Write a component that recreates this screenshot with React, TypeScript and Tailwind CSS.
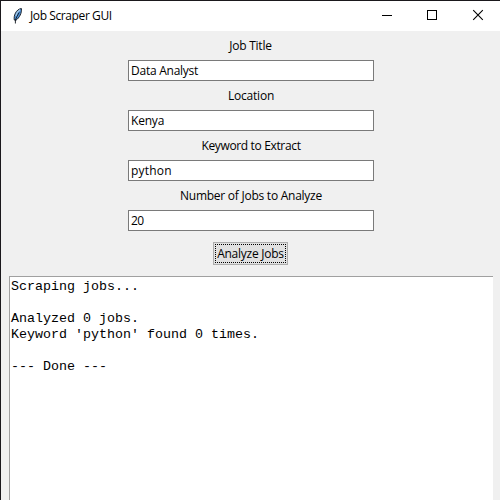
const fields = [
  { label: 'Job Title', value: 'Data Analyst', labelStyle: 'tracking-[-0.25px]', valueStyle: 'tracking-[-0.25px]' },
  { label: 'Location', value: 'Kenya', labelStyle: 'pl-px tracking-[-0.2px]', valueStyle: 'tracking-[-0.2px]' },
  { label: 'Keyword to Extract', value: 'python', labelStyle: 'pl-px tracking-[-0.35px]', valueStyle: 'tracking-[0.2px]' },
  { label: 'Number of Jobs to Analyze', value: '20', labelStyle: 'pl-px tracking-[-0.25px]', valueStyle: 'tracking-[-0.5px]' },
];

function Feather() {
  return (
    <svg width="16" height="16" viewBox="0 0 16 16" className="block">
      <path d="M12.4 0.5C10 0.7 7.6 2.6 6.4 5.2C5.2 7.6 4.9 9.8 5.3 12L6.8 12.4C10.6 9.6 12.9 5 12.4 0.5Z" fill="#4a8fd8" stroke="#20262e" strokeWidth="1" />
      <path d="M11 1.8C9 3 7.6 5.4 6.8 8" stroke="#b5cfe2" strokeWidth="1.1" fill="none" />
      <path d="M10.2 4.5C8.6 7 7.2 9.5 6.4 12V15.5" stroke="#10151c" strokeWidth="0.9" fill="none" />
    </svg>
  );
}

function TitleBar() {
  return (
    <header className="flex h-[30px] shrink-0 items-center bg-white pl-2">
      <Feather />
      <h1 className="ml-[5px] flex-1 whitespace-nowrap text-[12px] leading-4 tracking-[-0.4px]">Job Scraper GUI</h1>
      <div className="flex h-full items-center">
        <svg width="46" height="30" viewBox="0 0 46 30">
          <path d="M19 14.5H29" stroke="#000" shapeRendering="crispEdges" />
        </svg>
        <svg width="46" height="30" viewBox="0 0 46 30">
          <rect x="18.5" y="9.5" width="9" height="9" fill="none" stroke="#000" shapeRendering="crispEdges" />
        </svg>
        <svg width="45" height="30" viewBox="0 0 45 30">
          <path d="M18.2 9.2L27.8 18.8M27.8 9.2L18.2 18.8" stroke="#000" strokeWidth="1.1" />
        </svg>
      </div>
    </header>
  );
}

export default function App() {
  return (
    <div className="flex h-[500px] w-[500px] flex-col overflow-hidden border-l border-t border-[#1a181c] bg-[#f0f0f0] font-['Open_Sans','Noto_Sans',sans-serif] text-[12px] text-black">
      <TitleBar />
      <main className="flex min-h-0 flex-1 flex-col items-center pt-[5px]">
        {fields.map((f) => (
          <div key={f.label} className="flex h-[50px] w-[246px] shrink-0 flex-col">
            <label className={`h-6 whitespace-nowrap text-center leading-5 ${f.labelStyle}`}>{f.label}</label>
            <div className={`flex h-[21px] items-center border border-[#7a7a7a] bg-white pl-[2.5px] leading-4 ${f.valueStyle}`}>{f.value}</div>
          </div>
        ))}
        <button className="mt-[6px] flex h-[23px] w-[75px] shrink-0 border border-[#adadad] bg-[#e1e1e1] p-px">
          <span className="flex h-full w-full items-center justify-center whitespace-nowrap border border-dotted border-black leading-4 tracking-[-0.25px]">Analyze Jobs</span>
        </button>
        <div className="mt-[11px] flex min-h-0 w-full flex-1 pl-2 pr-[7px]">
          <pre className="h-full w-full border-l border-t border-[#a0a0a0] bg-white pl-px pt-[2px] font-['Liberation_Mono',monospace] text-[13.33px] leading-4">{`Scraping jobs...

Analyzed 0 jobs.
Keyword 'python' found 0 times.

--- Done ---`}</pre>
        </div>
      </main>
    </div>
  );
}
